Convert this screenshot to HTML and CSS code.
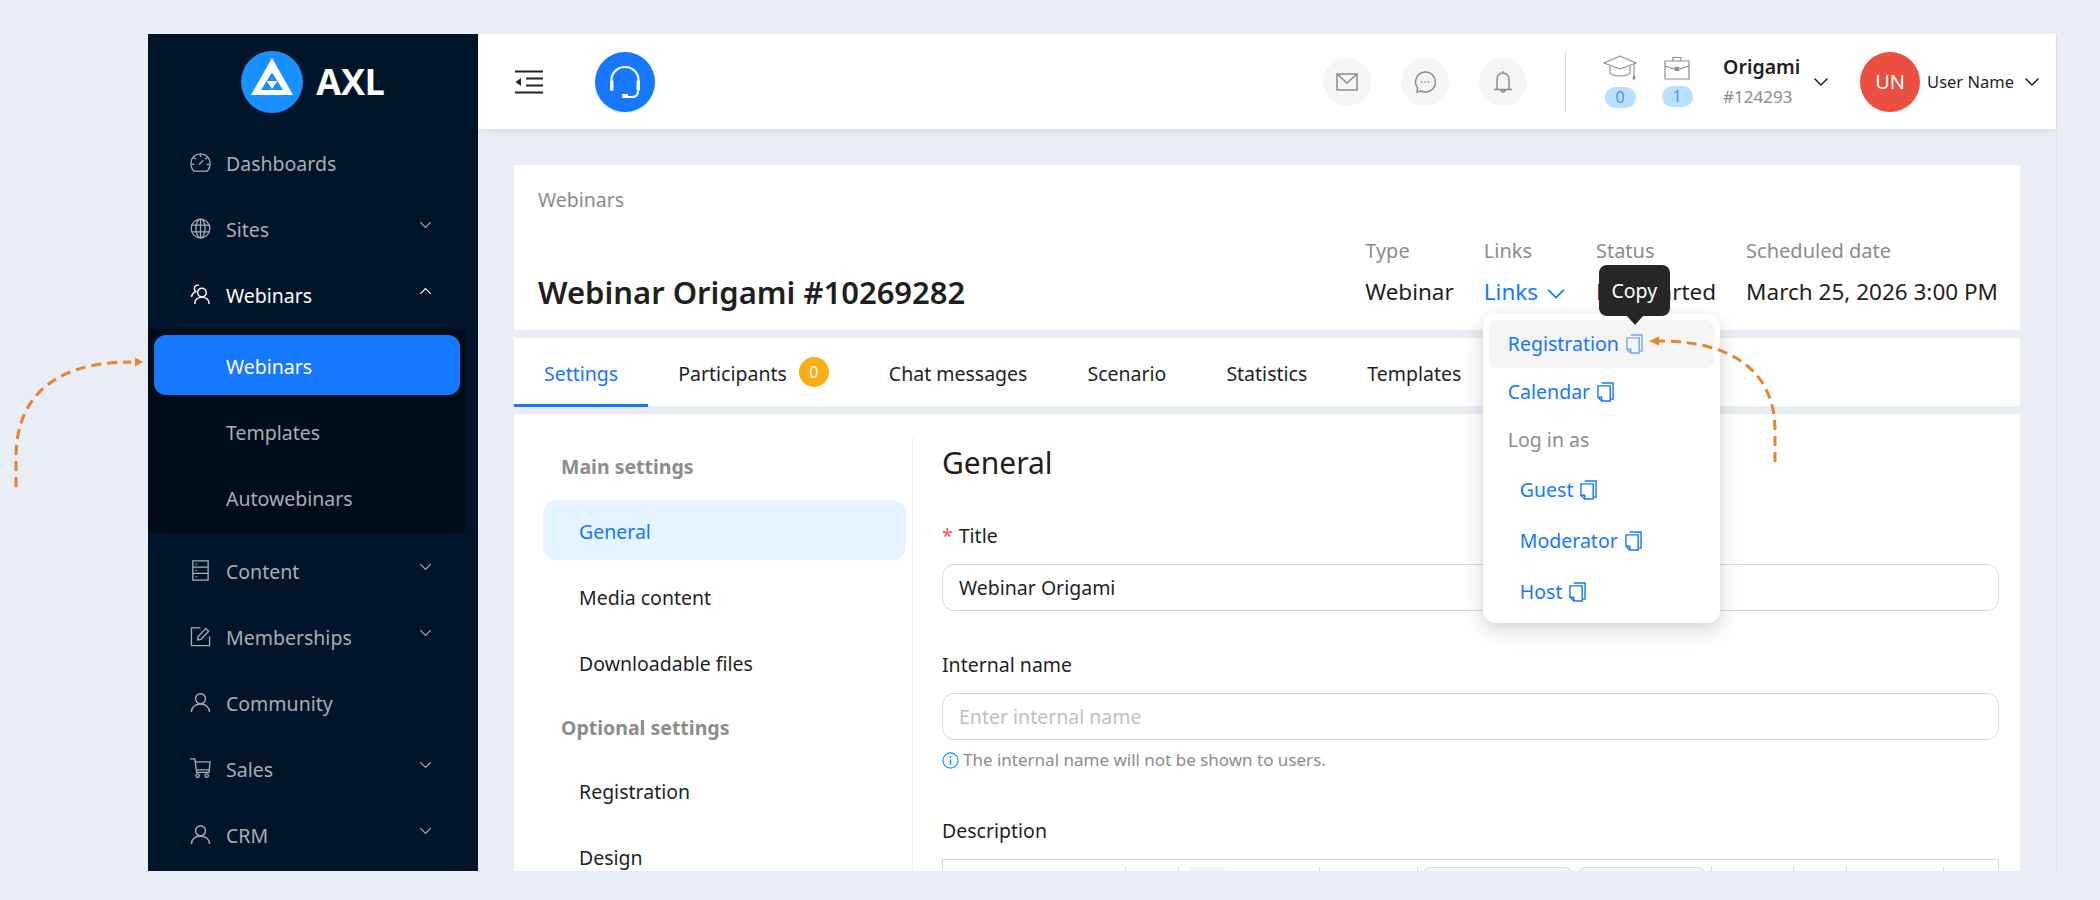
FILE: index.html
```html
<!DOCTYPE html>
<html lang="en">
<head>
<meta charset="utf-8">
<title>Webinar Origami</title>
<link rel="stylesheet" href="styles.css">
</head>
<body>
<svg class="defs" width="0" height="0" aria-hidden="true">
  <defs>
    <symbol id="chev" viewBox="0 0 16 10"><path d="M1.500 1.500 8 8l6.500-6.500" fill="none" stroke="currentColor" stroke-width="1.500"/></symbol>
    <symbol id="copy" viewBox="0 0 18 21"><path d="M5 1h12v17h-3" fill="none" stroke="currentColor" stroke-width="1.500"/><path d="M1 16V4h13v16H5z M1 16h4v4" fill="none" stroke="currentColor" stroke-width="1.500"/></symbol>
    <symbol id="user" viewBox="0 0 22 22"><circle cx="11" cy="7" r="5.200" fill="none" stroke="currentColor" stroke-width="1.500"/><path d="M1.500 21c0-5 4-8.500 9.500-8.500s9.500 3.500 9.500 8.500" fill="none" stroke="currentColor" stroke-width="1.500"/></symbol>
  </defs>
</svg>

<div class="app">
  <aside class="sidebar">
    <div class="brand">
      <svg class="brand-mark" viewBox="0 0 62 62"><circle cx="31" cy="31" r="31" fill="#1890ff"/><path d="M31 7 52 44H10z M31 21.500 20 39h22z" fill="#fff" fill-rule="evenodd"/><path d="M25.500 30h11L31 38z" fill="#fff"/></svg>
      <span class="brand-name">AXL</span>
    </div>
    <nav class="menu">
      <div class="item"><svg class="ico" viewBox="0 0 22 22" fill="none" stroke="currentColor" stroke-width="1.400"><path d="M4 20h14c1.500-1.500 3-4.500 3-8.500C21 6 16.500 2 11 2S1 6 1 11.500c0 4 1.500 7 3 8.500z"/><path d="m9.500 13 4.500-4.500M11 2.500v2.500M4 6l2 1.500M18 6l-2 1.500M2 13h2.500M20 13h-2.500"/></svg><span>Dashboards</span></div>
      <div class="item"><svg class="ico" viewBox="0 0 22 22" fill="none" stroke="currentColor" stroke-width="1.300"><circle cx="11" cy="11" r="9.800"/><ellipse cx="11" cy="11" rx="4.800" ry="9.800"/><path d="M11 1v20M1.500 7.500h19M1.500 14.500h19"/></svg><span>Sites</span><svg class="chev"><use href="#chev"/></svg></div>
      <div class="item open"><svg class="ico" viewBox="0 0 22 22" fill="none" stroke="currentColor" stroke-width="1.500"><circle cx="12.500" cy="9" r="4.500"/><path d="M5 21c0-4.500 3-7 7.500-7s7.500 2.500 7.500 7"/><path d="M9.500 1.500C7 .5 4.500 2 4.500 4.500c0 1.500.5 2.500 1.500 3.500C3.500 9 2 11 1.500 13.500"/></svg><span>Webinars</span><svg class="chev up"><use href="#chev"/></svg></div>
      <div class="sub">
        <div class="sub-item active">Webinars</div>
        <div class="sub-item">Templates</div>
        <div class="sub-item">Autowebinars</div>
      </div>
      <div class="item"><svg class="ico" viewBox="0 0 22 22" fill="none" stroke="currentColor" stroke-width="1.400"><path d="M3 1h16v20H3zM3 7.500h16M3 14h16"/><path d="M5.500 4.300h2M5.500 10.800h2M5.500 17.500h2" stroke-width="1"/></svg><span>Content</span><svg class="chev"><use href="#chev"/></svg></div>
      <div class="item"><svg class="ico" viewBox="0 0 22 22" fill="none" stroke="currentColor" stroke-width="1.400"><path d="M11 2H1.500v18.500H20.500V11"/><path d="M8 14.500l.5-3.500 8-8.500 3 3-8 8.500z"/></svg><span>Memberships</span><svg class="chev"><use href="#chev"/></svg></div>
      <div class="item"><svg class="ico"><use href="#user"/></svg><span>Community</span></div>
      <div class="item"><svg class="ico" viewBox="0 0 22 22" fill="none" stroke="currentColor" stroke-width="1.400"><path d="M0 1h5l2 14h13l1-11H5.500M7 12.500h13"/><circle cx="8" cy="18.500" r="1.800"/><circle cx="17.500" cy="18.500" r="1.800"/></svg><span>Sales</span><svg class="chev"><use href="#chev"/></svg></div>
      <div class="item"><svg class="ico"><use href="#user"/></svg><span>CRM</span><svg class="chev"><use href="#chev"/></svg></div>
    </nav>
  </aside>

  <div class="main">
    <header class="topbar">
      <svg class="fold" viewBox="0 0 28 24"><path d="M0 1.500h28M0 22.500h28M11 8.500h17M11 15.500h17" stroke="#222" stroke-width="2" fill="none"/><path d="M6 8v8l-5.500-4z" fill="#222"/></svg>
      <div class="support"><svg viewBox="0 0 34 34" width="34" height="34" fill="none" stroke="#fff" stroke-width="2.200"><path d="M3.500 19v-4C3.500 7.500 9.500 2 17 2s13.500 5.500 13.500 13v4"/><rect x="2" y="15" width="3.500" height="11" rx="1.700" fill="#fff" stroke="none"/><rect x="28.500" y="15" width="3.500" height="11" rx="1.700" fill="#fff" stroke="none"/><path d="M30 26c0 4-2 6-6 6h-7"/><rect x="14" y="29" width="6" height="4" fill="#fff" stroke="none"/></svg></div>
      <div class="spacer"></div>
      <div class="round"><svg viewBox="0 0 22 18" width="22" height="18" fill="none" stroke="#8c8c8c" stroke-width="1.500"><path d="M1 1h20v16H1zM1 1l10 9 10-9"/></svg></div>
      <div class="round"><svg viewBox="0 0 22 22" width="22" height="22" fill="none" stroke="#8c8c8c" stroke-width="1.500"><path d="M11 1a10 10 0 1 1-4 19l-4 1 .6-4A10 10 0 0 1 11 1z"/><path d="M7 11h1.500M10.300 11h1.500M13.600 11h1.500" stroke-width="1.300"/></svg></div>
      <div class="round"><svg viewBox="0 0 18 24" width="18" height="24" fill="none" stroke="#8c8c8c" stroke-width="1.500"><path d="M9 1v2M3 19V9a6 6 0 0 1 12 0v10M0 19.500h18M7 20a2 2 0 0 0 4 0z"/></svg></div>
      <div class="vline"></div>
      <div class="stat">
        <svg viewBox="0 0 34 26" width="34" height="26" fill="none" stroke="#8c8c8c" stroke-width="1.100"><path d="M17 1 33 8 17 14 1 8z"/><path d="M7 11v7c3 4 17 4 20 0v-7M31 9v11M30 24l1-4 1 4z"/></svg>
        <span class="pill">0</span>
      </div>
      <div class="stat">
        <svg viewBox="0 0 26 24" width="26" height="24" fill="none" stroke="#8c8c8c" stroke-width="1.200"><path d="M1 5h24v18H1zM1 10l9 3M25 10l-9 3M9 5V1.500h8V5"/><rect x="10.500" y="11" width="5" height="4" fill="#8c8c8c" stroke="none"/></svg>
        <span class="pill">1</span>
      </div>
      <div class="org"><b>Origami</b><small>#124293</small></div>
      <svg class="chev-dark org-chev"><use href="#chev"/></svg>
      <div class="avatar">UN</div>
      <span class="uname">User Name</span>
      <svg class="chev-dark"><use href="#chev"/></svg>
    </header>

    <div class="content">
      <section class="card head">
        <div class="crumb">Webinars</div>
        <div class="head-row">
          <h1>Webinar Origami #10269282</h1>
          <div class="metas">
            <div class="meta"><label>Type</label><span>Webinar</span></div>
            <div class="meta links"><label>Links</label><span class="blue">Links <svg class="chev-blue"><use href="#chev"/></svg></span>
              <div class="tooltip">Copy</div>
              <div class="drop">
                <div class="drow hover">Registration <svg class="cp faded"><use href="#copy"/></svg></div>
                <div class="drow">Calendar <svg class="cp"><use href="#copy"/></svg></div>
                <div class="drow grey">Log in as</div>
                <div class="drow in">Guest <svg class="cp"><use href="#copy"/></svg></div>
                <div class="drow in">Moderator <svg class="cp"><use href="#copy"/></svg></div>
                <div class="drow in">Host <svg class="cp"><use href="#copy"/></svg></div>
              </div>
            </div>
            <div class="meta"><label>Status</label><span>Not started</span></div>
            <div class="meta"><label>Scheduled date</label><span>March 25, 2026 3:00 PM</span></div>
          </div>
        </div>
      </section>

      <nav class="card tabs">
        <div class="tab on">Settings</div>
        <div class="tab">Participants <i class="count">0</i></div>
        <div class="tab">Chat messages</div>
        <div class="tab">Scenario</div>
        <div class="tab">Statistics</div>
        <div class="tab">Templates</div>
      </nav>

      <section class="card body">
        <div class="side">
          <div class="side-h">Main settings</div>
          <div class="side-i sel">General</div>
          <div class="side-i">Media content</div>
          <div class="side-i">Downloadable files</div>
          <div class="side-h">Optional settings</div>
          <div class="side-i">Registration</div>
          <div class="side-i">Design</div>
        </div>
        <div class="form">
          <h2>General</h2>
          <div class="lab first"><em>*</em>Title</div>
          <div class="field">Webinar Origami</div>
          <div class="lab">Internal name</div>
          <div class="field ph">Enter internal name</div>
          <div class="hint"><svg viewBox="0 0 18 18" width="17" height="17" fill="none" stroke="#1890ff" stroke-width="1.300"><circle cx="9" cy="9" r="8"/><path d="M9 8v5.500M9 4.500v1.800" stroke-width="1.600"/></svg>The internal name will not be shown to users.</div>
          <div class="lab desc">Description</div>
          <div class="editor">
            <div class="tb w184"></div>
            <div class="tb w53"></div>
            <div class="tb w141"><i class="sq"></i></div>
            <div class="tb w98"></div>
            <div class="tb grow"><i class="bt w149"></i><i class="bt w126"></i></div>
            <div class="tb w82"><i class="mini"></i><i class="mini"></i></div>
            <div class="tb w53"></div>
            <div class="tb w97"></div>
          </div>
        </div>
      </section>
    </div>
  </div>
</div>

<svg class="arrow arrow-l" viewBox="0 0 140 140" width="140" height="140" fill="none"><path d="M7 130V100C7 45 40 5 122 5" stroke="#e8832a" stroke-width="3" stroke-dasharray="10 6"/><path d="M126 .5 134 5l-8 4.500z" fill="#e8832a"/></svg>
<svg class="arrow arrow-r" viewBox="0 0 140 130" width="140" height="130" fill="none"><path d="M128 126V95C128 35 85 5 12 5" stroke="#e8832a" stroke-width="3" stroke-dasharray="10 6"/><path d="M12 .5 2 5l10 4.500z" fill="#e8832a"/></svg>
</body>
</html>
```
FILE: styles.css
```css
* { box-sizing: border-box; }
html, body { margin: 0; height: 100%; }
body {
  background: #e9eef6;
  font-family: "Noto Sans", "Open Sans", sans-serif;
  font-size: 19.5px;
  color: #1f1f1f;
  padding: 34px 0 0 148px;
  overflow: hidden;
  position: relative;
}
.defs { position: absolute; }

.app { width: 1909px; height: 837px; display: flex; overflow: hidden; }

/* sidebar */
.sidebar { width: 330px; flex: none; background: #001529; color: #a6adb4; }
.brand { height: 95px; display: flex; align-items: center; justify-content: center; gap: 13px; }
.brand-mark { width: 62px; height: 62px; }
.brand-name { font: 700 36px/1 "Open Sans", sans-serif; color: #fff; letter-spacing: -.3px; }
.item { height: 66px; display: flex; align-items: center; padding-left: 42px; }
.item span { padding-top: 2px; }
.item.open { color: #fff; }
.ico { width: 21px; height: 21px; margin-right: 15px; flex: none; }
.chev { width: 13px; height: 8px; margin-left: auto; margin-right: 46px; margin-top: -6px; }
.chev.up { transform: rotate(180deg); }
.sub { width: 317px; margin: 2px 0 4px; padding: 6px 0; background: #000c17; }
.sub-item { height: 60px; margin: 0 5px 6px 6px; padding: 2px 0 0 72px; display: flex; align-items: center; border-radius: 12px; }
.sub-item:last-child { margin-bottom: 0; }
.sub-item.active { background: #1677ff; color: #fff; }

/* topbar */
.main { flex: 1; min-width: 0; border-right: 1px solid #dfe3ea; }
.topbar { height: 95px; background: #fff; display: flex; align-items: center; padding-right: 16px; box-shadow: 0 2px 8px rgba(29, 35, 41, .08); position: relative; }
.fold { width: 28px; height: 24px; margin-left: 37px; flex: none; }
.support { width: 60px; height: 60px; margin-left: 52px; border-radius: 50%; background: #1677ff; display: flex; align-items: center; justify-content: center; box-shadow: 0 2px 0 #e6f4ff; }
.spacer { flex: 1; }
.round { width: 48px; height: 48px; margin-right: 30px; border-radius: 50%; background: #f5f5f5; display: flex; align-items: center; justify-content: center; }
.round + .vline { margin-left: 8px; }
.vline { width: 1px; height: 62px; background: #d9d9d9; margin-right: 38px; }
.stat { width: 32px; margin-right: 25px; display: flex; flex-direction: column; align-items: center; gap: 6px; }
.pill { width: 31px; height: 21px; border-radius: 10px; background: #bae0ff; color: #4096ff; font-size: 16px; line-height: 21px; text-align: center; }
.org { display: flex; flex-direction: column; margin-left: 5px; width: 90px; }
.org b { font-weight: 600; font-size: 19.5px; line-height: 26px; }
.org small { font-size: 17px; color: #8c8c8c; line-height: 24px; margin-top: 5px; }
.chev-dark { width: 16px; height: 10px; color: #222; flex: none; }
.org-chev { margin-right: 31px; }
.avatar { width: 60px; height: 60px; border-radius: 50%; background: #ea4f3f; color: #fff; font-size: 20px; display: flex; align-items: center; justify-content: center; }
.uname { font-size: 16.500px; margin: 0 10px 0 7px; white-space: nowrap; }

/* content */
.content { padding: 36px 36px 0; }
.card { background: #fff; }
.head { height: 165px; padding: 22px 22px 0 24px; margin-bottom: 8px; }
.crumb { color: #8c8c8c; font-size: 19.5px; line-height: 26px; }
.head-row { display: flex; justify-content: space-between; align-items: flex-end; margin-top: 25px; }
h1 { margin: 0 0 -8px; font-size: 31px; line-height: 42px; font-weight: 600; }
.metas { display: flex; gap: 30px; }
.meta { display: flex; flex-direction: column; gap: 15px; position: relative; }
.meta label { color: #8c8c8c; line-height: 26px; font-size: 20px; }
.meta span { line-height: 26px; white-space: nowrap; font-size: 22.500px; }
.blue { color: #1677ff; }
.chev-blue { width: 20px; height: 12px; margin-left: 2px; }

.tooltip { position: absolute; left: 115px; top: 27px; width: 71px; height: 51px; background: #262626; color: #fff; border-radius: 8px; display: flex; align-items: center; justify-content: center; z-index: 3; }
.tooltip::after { content: ""; position: absolute; left: 28px; bottom: -9px; border: 8px solid transparent; border-top-color: #262626; border-bottom: 0; border-top-width: 9px; }
.drop { position: absolute; left: -1px; top: 76px; width: 237px; height: 309px; background: #fff; border-radius: 12px; padding: 6px; box-shadow: 0 8px 24px rgba(0, 0, 0, .14), 0 3px 8px rgba(0, 0, 0, .06); z-index: 2; color: #1677ff; font-size: 19.5px; }
.drow { height: 48px; display: flex; align-items: center; padding-left: 19px; line-height: 1; white-space: nowrap; gap: 7px; border-radius: 8px; }
.drow.hover { background: #f5f5f5; }
.drow.grey { color: #8c8c8c; }
.drow.in { padding-left: 31px; height: 51px; }
.cp { width: 17px; height: 20px; }
.cp.faded { opacity: .6; }

/* tabs */
.tabs { height: 68px; margin-bottom: 8px; display: flex; align-items: center; gap: 30px; }
.tab { height: 69px; padding: 3px 30px 0; margin-right: -30px; display: flex; align-items: center; gap: 12px; white-space: nowrap; }
.tab.on { color: #1677ff; box-shadow: inset 0 -3px 0 #1677ff; }
.count { width: 30px; height: 30px; border-radius: 50%; background: #faad14; color: #fff; font-style: normal; font-size: 16px; display: flex; align-items: center; justify-content: center; margin-top: -3px; }

/* body */
.body { height: 460px; display: flex; overflow: hidden; padding-top: 23px; }
.side { width: 399px; flex: none; padding: 0 6px 0 29px; border-right: 1px solid #f0f0f0; }
.side-h { height: 60px; padding-left: 18px; line-height: 60px; color: #8c8c8c; font-weight: 700; margin-bottom: 2px; }
.side-h:first-child { margin-bottom: 3px; }
.side-i { height: 60px; padding: 3px 0 0 36px; display: flex; align-items: center; border-radius: 14px; margin-bottom: 6px; }
.side-i.sel { background: #e6f4ff; color: #1677ff; }
.form { flex: 1; padding: 3px 21px 0 29px; }
h2 { margin: 0; font-size: 30px; font-weight: 400; line-height: 46px; }
.lab { line-height: 26px; margin: 41px 0 15px; }
.lab.first { margin-top: 37px; }
.lab em { color: #ff4d4f; font-style: normal; margin-right: 6px; }
.field { height: 47px; border: 1px solid #d9d9d9; border-radius: 12px; padding: 0 16px; display: flex; align-items: center; }
.field.ph { color: #bfbfbf; }
.hint { display: flex; align-items: center; gap: 4px; color: #8c8c8c; font-size: 17px; margin-top: 10px; line-height: 20px; }
.lab.desc { margin-top: 48px; }
.editor { height: 60px; border: 1px solid #d9d9d9; display: flex; padding-top: 7px; }
.tb { border-right: 1px solid #d9d9d9; height: 50px; display: flex; gap: 7px; padding-left: 5px; }
.w184 { width: 183px; }
.w53 { width: 53px; }
.w141 { width: 141px; padding-left: 9px; }
.w98 { width: 98px; }
.w82 { width: 82px; }
.w97 { width: 97px; }
.grow { width: 294px; }
.sq { width: 37px; height: 50px; background: #f5f5f5; }
.bt { height: 50px; border: 1px solid #d9d9d9; border-radius: 6px; background: #f5f5f5; }
.w149 { width: 149px; }
.w126 { width: 126px; }
.mini { width: 31px; height: 30px; margin-top: 4px; background: #d9d9d9; border-radius: 2px; }

/* hand-drawn callouts */
.arrow { position: absolute; z-index: 5; pointer-events: none; }
.arrow-l { left: 9px; top: 357px; }
.arrow-r { left: 1647px; top: 336px; }
```
